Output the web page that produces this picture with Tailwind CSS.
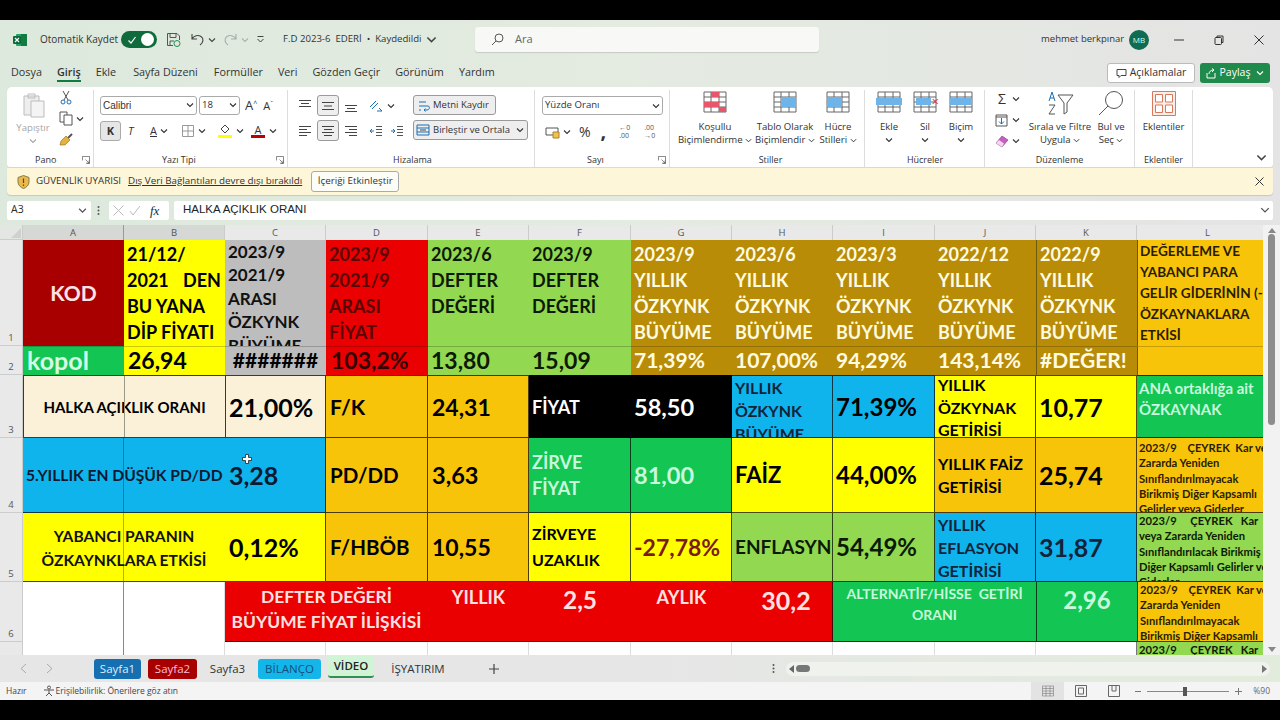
<!DOCTYPE html>
<html lang="tr">
<head>
<meta charset="UTF-8" />
<title>F.D 2023-6 EDERİ - Excel</title>
<script src="https://cdn.jsdelivr.net/npm/@tailwindcss/browser@4"></script>
</head>
<body class="bg-black w-[1280px] h-[720px] overflow-hidden font-['Open_Sans',sans-serif] text-[#2b2b2b]">
<svg class="absolute w-0 h-0">
  <symbol id="chev" viewBox="0 0 8 8"><path d="M1 2.5 4 5.5 7 2.5" fill="none" stroke="currentColor" stroke-width="1.1"/></symbol>
  <symbol id="launch" viewBox="0 0 9 9"><path d="M.5 5V.5H8.5V8.5H5M4 4 8 8M8 5V8H5" fill="none" stroke="#666" stroke-width=".9"/></symbol>
  <symbol id="tbl" viewBox="0 0 24 22"><path d="M1 1H23V21H1ZM1 6H23M1 11H23M1 16H23M8 1V21M16 1V21" fill="none" stroke="#666" stroke-width="1"/></symbol>
</svg>

<div class="h-5"></div>
<div class="h-[680px] flex flex-col bg-gradient-to-r from-[#dde9dd] via-[#e4ebe1] to-[#e4e4e4]">

  <!-- title bar -->
  <div class="h-[36px] pt-[3px] flex items-center text-[10px] whitespace-nowrap">
    <svg class="ml-[13px] w-[14px] h-[14px]" viewBox="0 0 14 14"><rect x="3" y="1" width="11" height="12" rx="1" fill="#21a366"/><rect x="8" y="1" width="6" height="12" fill="#107c41"/><rect y="3" width="8" height="8" rx="1" fill="#0b6b38"/><path d="M2 5 6 9M6 5 2 9" stroke="#fff" stroke-width="1.1"/></svg>
    <span class="ml-[13px] w-[81px] text-[#333]">Otomatik Kaydet</span>
    <div class="w-[36px] h-[17px] rounded-full bg-[#0f6b3c] flex items-center justify-between px-[3px]">
      <svg class="w-[10px] h-[10px] ml-[3px]" viewBox="0 0 10 10"><path d="M1.5 5.5 4 8 8.5 2" fill="none" stroke="#fff" stroke-width="1.2"/></svg>
      <span class="w-[13px] h-[13px] rounded-full bg-white"></span>
    </div>
    <svg class="ml-[9px] w-[15px] h-[15px]" viewBox="0 0 15 15" fill="none" stroke="#555"><path d="M1.5 1.5H11L13.5 4V8M1.5 1.5V13.5H7M4 1.5V5.5H10V1.5M4 13.5V9H8"/><circle cx="11" cy="11.5" r="3" stroke="#1f8f52"/></svg>
    <svg class="ml-[9px] w-[15px] h-[15px]" viewBox="0 0 15 15" fill="none" stroke="#444" stroke-width="1.1"><path d="M2 2V7H7M2 7C4 3.5 8 2.5 11 4.5S13.5 10.5 10 13"/></svg>
    <svg class="ml-[3px] w-[8px] h-[8px] text-[#444]"><use href="#chev"/></svg>
    <svg class="ml-[7px] w-[15px] h-[15px]" viewBox="0 0 15 15" fill="none" stroke="#a8aca8" stroke-width="1.1"><path d="M13 2V7H8M13 7C11 3.5 7 2.5 4 4.5S1.5 10.5 5 13"/></svg>
    <svg class="ml-[3px] w-[8px] h-[8px] text-[#b0b0b0]"><use href="#chev"/></svg>
    <svg class="ml-[7px] w-[9px] h-[9px]" viewBox="0 0 9 9" fill="none" stroke="#444"><path d="M1.5 1.5H7.5M1.5 4 4.5 7 7.5 4"/></svg>
    <span class="ml-[18px] w-[140px] text-[9.6px] text-[#333] whitespace-pre">F.D 2023-6  EDERİ  •  Kaydedildi</span>
    <svg class="ml-[3px] w-[11px] h-[11px] text-[#444]"><use href="#chev"/></svg>
    <div class="ml-[38px] w-[344px] h-[25px] bg-[#f8f8f6] rounded-[3px] shadow-[0_1px_1px_#0002] flex items-center text-[#666] text-[11px]">
      <svg class="ml-[16px] w-[13px] h-[13px]" viewBox="0 0 13 13" fill="none" stroke="#555"><circle cx="8" cy="5" r="4"/><path d="M5 8 1 12"/></svg>
      <span class="ml-[11px]">Ara</span>
    </div>
    <span class="ml-[222px] w-[88px] text-[9.5px] text-[#333]">mehmet berkpınar</span>
    <span class="w-5 h-5 rounded-full bg-[#0f6b52] text-[#cfe] text-[8px] flex items-center justify-center">MB</span>
    <svg class="ml-[25px] w-[10px] h-[10px]" viewBox="0 0 10 10"><path d="M0 5H10" stroke="#333"/></svg>
    <svg class="ml-[30px] w-[10px] h-[10px]" viewBox="0 0 10 10" fill="none" stroke="#333"><rect x="1" y="2.5" width="6.5" height="7" rx="1"/><path d="M3 2.5V1H9V7.5H7.5"/></svg>
    <svg class="ml-[30px] w-[10px] h-[10px]" viewBox="0 0 10 10"><path d="M.5.5 9.5 9.5M9.5.5.5 9.5" stroke="#333"/></svg>
  </div>

  <!-- menu -->
  <div class="h-[31px] flex items-start text-[10.8px] text-[#333] pl-[11px] pt-[8px]">
    <span>Dosya</span>
    <span class="ml-[15px] font-semibold border-b-2 border-[#107c41] h-[18px]">Giriş</span>
    <span class="ml-[15px]">Ekle</span>
    <span class="ml-[17px]">Sayfa Düzeni</span>
    <span class="ml-[16px]">Formüller</span>
    <span class="ml-[15px]">Veri</span>
    <span class="ml-[15px]">Gözden Geçir</span>
    <span class="ml-[15px]">Görünüm</span>
    <span class="ml-[15px]">Yardım</span>
    <div class="ml-auto mr-[10px] -mt-[1px] flex gap-[5px]">
      <span class="w-[88px] h-[20px] bg-white border border-[#bbb] rounded-[3px] flex items-center justify-center gap-[3px] text-[10.5px]">
        <svg class="w-[11px] h-[11px]" viewBox="0 0 11 11" fill="none" stroke="#444"><path d="M1 1.5H10V7.5H5L3 9.5V7.5H1Z"/></svg>Açıklamalar</span>
      <span class="w-[70px] h-[20px] bg-[#1f8a4c] text-white rounded-[3px] flex items-center justify-center gap-[3px] text-[10.5px]">
        <svg class="w-[11px] h-[11px]" viewBox="0 0 11 11" fill="none" stroke="#fff"><path d="M1 5V10H9V5M3 6C3 3.5 5 2 7.5 2M6 .5 8 2 6 4"/></svg>Paylaş
        <svg class="w-[8px] h-[8px] ml-[3px]"><use href="#chev"/></svg></span>
    </div>
  </div>

  <!-- ribbon -->
  <div class="mx-[7px] h-[80px] bg-white rounded-t-[5px] rounded-b-[3px] flex text-[9.6px] text-[#333] shadow-[0_1px_1px_#0001] whitespace-nowrap">

    <!-- Pano -->
    <div class="w-[87px] flex flex-col border-r border-[#ddd] mt-[3px]">
      <div class="flex-1 flex">
        <div class="w-[52px] flex flex-col items-center pt-[2px] text-[#a6a6a6]">
          <svg class="w-[24px] h-[26px]" viewBox="0 0 24 26" fill="none" stroke="#bdbdbd"><path d="M3 4H18V23H3Z" fill="#eee"/><path d="M7 2H14V6H7Z"/><path d="M10 9H23V25H10Z" fill="#f4f4f4"/></svg>
          <span class="mt-[3px]">Yapıştır</span>
          <svg class="w-[8px] h-[8px] mt-[2px]"><use href="#chev"/></svg>
        </div>
        <div class="flex flex-col items-start gap-[6px]">
          <svg class="w-[14px] h-[15px]" viewBox="0 0 14 15" fill="none" stroke="#555"><path d="M4 1 9 10M10 1 5 10"/><circle cx="4" cy="12" r="2" stroke="#1b6fb5"/><circle cx="10" cy="12" r="2" stroke="#1b6fb5"/></svg>
          <div class="flex items-center"><svg class="w-[14px] h-[15px]" viewBox="0 0 14 15" fill="none" stroke="#555"><path d="M1 1H8V11H1Z"/><path d="M5 4H13V14H5Z" fill="#fff"/></svg><svg class="w-[8px] h-[8px] ml-[3px]"><use href="#chev"/></svg></div>
          <svg class="w-[15px] h-[15px]" viewBox="0 0 15 15"><path d="M9 6 13 2" stroke="#555" stroke-width="2"/><path d="M2 9 7 4 11 8 6 13 1 13Z" fill="#e3b23c" stroke="#8a6a20" stroke-width=".6"/></svg>
        </div>
      </div>
      <div class="h-[15px] flex items-center pl-[28px] pr-[3px] text-[9px] justify-between"><span>Pano</span><svg class="w-[8px] h-[8px]"><use href="#launch"/></svg></div>
    </div>

    <!-- Yazı Tipi -->
    <div class="w-[194px] flex flex-col border-r border-[#ddd] mt-[3px] pl-[6px]">
      <div class="flex-1 pt-[6px]">
        <div class="flex items-center h-[18px]">
          <div class="w-[97px] h-[19px] border border-[#aaa] rounded-[3px] flex items-center justify-between px-[2px]"><span class="font-['Liberation_Sans',sans-serif] text-[10px]">Calibri</span><svg class="w-[8px] h-[8px]"><use href="#chev"/></svg></div>
          <div class="ml-[2px] w-[41px] h-[19px] border border-[#aaa] rounded-[3px] flex items-center justify-between px-[2px]"><span>18</span><svg class="w-[8px] h-[8px]"><use href="#chev"/></svg></div>
          <span class="ml-[5px] text-[13px] leading-none">A<sup class="text-[7px]">^</sup></span>
          <span class="ml-[6px] text-[11px] leading-none">A<sup class="text-[7px]">ˇ</sup></span>
        </div>
        <div class="flex items-center h-[20px] mt-[7px]">
          <span class="w-[21px] h-[20px] bg-[#e6e6e6] border border-[#aaa] rounded-[3px] font-bold flex items-center justify-center text-[11px]">K</span>
          <span class="ml-[7px] w-[6px] italic text-[11px]">T</span>
          <span class="ml-[16px] underline text-[11px]">A</span>
          <svg class="ml-[3px] w-[8px] h-[8px]"><use href="#chev"/></svg>
          <svg class="ml-[14px] w-[12px] h-[12px]" viewBox="0 0 12 12" fill="none" stroke="#999"><path d="M.5.5H11.5V11.5H.5ZM6 .5V11.5M.5 6H11.5"/></svg>
          <svg class="ml-[4px] w-[8px] h-[8px]"><use href="#chev"/></svg>
          <div class="ml-[12px] flex flex-col items-center"><svg class="w-[13px] h-[11px]" viewBox="0 0 13 11" fill="none" stroke="#444"><path d="M3 5 7 1 11 5 7 9Z"/></svg><span class="w-[14px] h-[3px] bg-[#ffff00]"></span></div>
          <svg class="ml-[4px] w-[8px] h-[8px]"><use href="#chev"/></svg>
          <div class="ml-[7px] flex flex-col items-center leading-none"><span class="text-[11px] h-[11px] leading-[11px]">A</span><span class="w-[14px] h-[3px] bg-[#c00000]"></span></div>
          <svg class="ml-[4px] w-[8px] h-[8px]"><use href="#chev"/></svg>
        </div>
      </div>
      <div class="h-[15px] flex items-center text-[9px] pr-[3px] justify-between"><span class="ml-[62px]">Yazı Tipi</span><svg class="w-[8px] h-[8px]"><use href="#launch"/></svg></div>
    </div>

    <!-- Hizalama -->
    <div class="w-[247px] flex flex-col border-r border-[#ddd] mt-[3px] pl-[10px]">
      <div class="flex-1 pt-[5px] flex">
        <div class="w-[115px]">
          <div class="flex items-center h-[21px]">
            <svg class="w-[14px] h-[14px]" viewBox="0 0 14 14" stroke="#444"><path d="M1 1.5H13M3 4.5H11M1 7.5H13"/></svg>
            <span class="ml-[5px] w-[22px] h-[21px] bg-[#eee] border border-[#999] rounded-[3px] flex items-center justify-center"><svg class="w-[14px] h-[14px]" viewBox="0 0 14 14" stroke="#444"><path d="M1 3.5H13M3 7H11M1 10.5H13"/></svg></span>
            <svg class="ml-[5px] w-[14px] h-[14px]" viewBox="0 0 14 14" stroke="#444"><path d="M1 6.5H13M3 9.5H11M1 12.5H13"/></svg>
            <svg class="ml-[11px] w-[14px] h-[14px]" viewBox="0 0 14 14" fill="none" stroke="#555"><path d="M1 8 7 2M3 10 9 4M8 12H13M13 12 10 9" stroke="#1b6fb5"/></svg>
            <svg class="ml-[4px] w-[8px] h-[8px]"><use href="#chev"/></svg>
          </div>
          <div class="flex items-center h-[21px] mt-[4px]">
            <svg class="w-[14px] h-[14px]" viewBox="0 0 14 14" stroke="#444"><path d="M1 2.5H13M1 5.5H9M1 8.5H13M1 11.5H9"/></svg>
            <span class="ml-[5px] w-[22px] h-[21px] bg-[#eee] border border-[#999] rounded-[3px] flex items-center justify-center"><svg class="w-[14px] h-[14px]" viewBox="0 0 14 14" stroke="#444"><path d="M1 2.5H13M3 5.5H11M1 8.5H13M3 11.5H11"/></svg></span>
            <svg class="ml-[5px] w-[14px] h-[14px]" viewBox="0 0 14 14" stroke="#444"><path d="M1 2.5H13M5 5.5H13M1 8.5H13M5 11.5H13"/></svg>
            <svg class="ml-[11px] w-[14px] h-[14px]" viewBox="0 0 14 14" fill="none" stroke="#555"><path d="M7 2.5H13M7 5.5H13M7 8.5H13M7 11.5H13"/><path d="M5 7H1M3 5 1 7 3 9" stroke="#1b6fb5"/></svg>
            <svg class="ml-[7px] w-[14px] h-[14px]" viewBox="0 0 14 14" fill="none" stroke="#555"><path d="M7 2.5H13M7 5.5H13M7 8.5H13M7 11.5H13"/><path d="M1 7H5M3 5 5 7 3 9" stroke="#1b6fb5"/></svg>
          </div>
        </div>
        <div>
          <div class="w-[83px] h-[20px] bg-[#eee] border border-[#999] rounded-[3px] flex items-center px-[4px] gap-[3px] text-[9.5px]">
            <svg class="w-[12px] h-[13px]" viewBox="0 0 12 13" fill="none" stroke="#1b6fb5"><path d="M1 3H8M1 7H10C12 7 12 11 9 11H6M7.5 9.5 6 11 7.5 12.5M1 11H3"/></svg>Metni Kaydır</div>
          <div class="mt-[5px] w-[115px] h-[20px] bg-[#eee] border border-[#999] rounded-[3px] flex items-center px-[2px] gap-[3px] text-[9.5px]">
            <svg class="w-[14px] h-[14px]" viewBox="0 0 14 14" fill="none" stroke="#1b6fb5"><path d="M1 2H13V12H1ZM1 5H13M1 9H13"/><path d="M4 7H10" stroke="#444"/></svg>
            Birleştir ve Ortala<svg class="w-[8px] h-[8px] ml-auto mr-[1px]"><use href="#chev"/></svg></div>
        </div>
      </div>
      <div class="h-[15px] flex items-center text-[9px]"><span class="ml-[95px]">Hizalama</span></div>
    </div>

    <!-- Sayı -->
    <div class="w-[135px] flex flex-col border-r border-[#ddd] mt-[3px] pl-[7px]">
      <div class="flex-1 pt-[6px]">
        <div class="w-[121px] h-[19px] border border-[#aaa] rounded-[3px] flex items-center justify-between px-[2px]">Yüzde Oranı<svg class="w-[8px] h-[8px]"><use href="#chev"/></svg></div>
        <div class="flex items-center h-[20px] mt-[7px] pl-[3px]">
          <svg class="w-[15px] h-[14px]" viewBox="0 0 15 14" fill="none" stroke="#555"><path d="M1 3H13V10H1Z"/><path d="M8 7H14V13H8Z" fill="#f2c14e" stroke="#a9832a"/></svg>
          <svg class="ml-[3px] w-[8px] h-[8px]"><use href="#chev"/></svg>
          <span class="ml-[8px] text-[14px] leading-none">%</span>
          <span class="ml-[10px] text-[20px] font-bold leading-none h-[22px]">,</span>
          <span class="ml-[13px] text-[7px] leading-[8px] text-[#555] w-[14px]">←0<br>.00</span>
          <span class="ml-[11px] text-[7px] leading-[8px] text-[#555] w-[14px]">.00<br>→0</span>
        </div>
      </div>
      <div class="h-[15px] flex items-center text-[9px] pr-[3px] justify-between"><span class="ml-[45px]">Sayı</span><svg class="w-[8px] h-[8px]"><use href="#launch"/></svg></div>
    </div>

    <!-- Stiller -->
    <div class="w-[195px] flex flex-col border-r border-[#ddd] mt-[3px] pl-[7px]">
      <div class="flex-1 flex text-center leading-[13px]">
        <div class="w-[76px] flex flex-col items-center">
          <span class="relative h-[22px] w-[24px] mt-[1px] mb-[7px]"><svg class="w-[24px] h-[22px]"><use href="#tbl"/></svg><span class="absolute left-[8px] top-[1px] w-[8px] h-[5px] bg-[#e8566b]"></span><span class="absolute left-[1px] top-[11px] w-[15px] h-[5px] bg-[#e8566b]"></span><span class="absolute left-[16px] top-[16px] w-[7px] h-[5px] bg-[#e8566b]"></span></span>
          <span>Koşullu</span>
          <span>Biçimlendirme <svg class="inline w-[7px] h-[7px]"><use href="#chev"/></svg></span>
        </div>
        <div class="w-[68px] -ml-[2px] flex flex-col items-center">
          <span class="relative h-[22px] w-[24px] mt-[1px] mb-[7px]"><svg class="w-[24px] h-[22px]"><use href="#tbl"/></svg><span class="absolute left-[8px] top-[6px] w-[15px] h-[10px] bg-[#6fb4e8]"></span></span>
          <span>Tablo Olarak</span>
          <span>Biçimlendir <svg class="inline w-[7px] h-[7px]"><use href="#chev"/></svg></span>
        </div>
        <div class="w-[42px] -ml-[2px] flex flex-col items-center">
          <span class="relative h-[22px] w-[24px] mt-[1px] mb-[7px]"><svg class="w-[24px] h-[22px]"><use href="#tbl"/></svg><span class="absolute left-[1px] top-[6px] w-[15px] h-[10px] bg-[#6fb4e8]"></span></span>
          <span>Hücre</span>
          <span>Stilleri <svg class="inline w-[7px] h-[7px]"><use href="#chev"/></svg></span>
        </div>
      </div>
      <div class="h-[15px] flex items-center justify-center text-[9px]">Stiller</div>
    </div>

    <!-- Hücreler -->
    <div class="w-[120px] flex flex-col border-r border-[#ddd] mt-[3px] pl-[11px]">
      <div class="flex-1 flex text-center leading-[13px] gap-[10px]">
        <div class="w-[26px] flex flex-col items-center">
          <span class="relative h-[22px] w-[26px] mt-[1px] mb-[7px]"><svg class="w-[26px] h-[22px]"><use href="#tbl"/></svg><span class="absolute left-0 top-[7px] w-[26px] h-[7px] bg-[#6fb4e8]"></span></span><span>Ekle</span><svg class="w-[8px] h-[8px] mt-[3px]"><use href="#chev"/></svg>
        </div>
        <div class="w-[26px] flex flex-col items-center">
          <span class="relative h-[22px] w-[26px] mt-[1px] mb-[7px]"><svg class="w-[26px] h-[22px]"><use href="#tbl"/></svg><span class="absolute left-[4px] top-[7px] w-[15px] h-[7px] bg-[#6fb4e8]"></span><span class="absolute right-[-1px] top-[4px] text-[#c8413a] text-[13px] leading-none">×</span></span><span>Sil</span><svg class="w-[8px] h-[8px] mt-[3px]"><use href="#chev"/></svg>
        </div>
        <div class="w-[26px] flex flex-col items-center">
          <span class="relative h-[22px] w-[24px] mt-[1px] mb-[7px]"><svg class="w-[24px] h-[22px]"><use href="#tbl"/></svg><span class="absolute left-[1px] top-[7px] w-[22px] h-[7px] bg-[#6fb4e8]"></span></span><span>Biçim</span><svg class="w-[8px] h-[8px] mt-[3px]"><use href="#chev"/></svg>
        </div>
      </div>
      <div class="h-[15px] flex items-center justify-center text-[9px] pr-[10px]">Hücreler</div>
    </div>

    <!-- Düzenleme -->
    <div class="w-[150px] flex flex-col border-r border-[#ddd] mt-[3px] pl-[10px]">
      <div class="flex-1 flex leading-[13px] text-center">
        <div class="w-[32px] flex flex-col gap-[5px] pt-[1px]">
          <div class="flex items-center h-[16px]"><span class="text-[14px] leading-none w-[14px]">Σ</span><svg class="ml-[3px] w-[8px] h-[8px]"><use href="#chev"/></svg></div>
          <div class="flex items-center h-[16px]"><svg class="w-[13px] h-[13px]" viewBox="0 0 13 13" fill="none" stroke="#555"><path d="M1 1H12V12H1ZM1 3H12"/><path d="M6.5 4V10M4 7.5 6.5 10 9 7.5" stroke="#1b6fb5"/></svg><svg class="ml-[4px] w-[8px] h-[8px]"><use href="#chev"/></svg></div>
          <div class="flex items-center h-[16px]"><svg class="w-[14px] h-[13px]" viewBox="0 0 14 13"><path d="M1 8 7 1 13 5 7 12Z" fill="#c65fc1" stroke="#7a3a78" stroke-width=".6"/><path d="M1 8 4 5 9 8.5 7 12Z" fill="#f3d6f2"/></svg><svg class="ml-[3px] w-[8px] h-[8px]"><use href="#chev"/></svg></div>
        </div>
        <div class="w-[66px] flex flex-col items-center">
          <svg class="w-[28px] h-[26px] mb-[4px]" viewBox="0 0 28 26" fill="none" stroke="#555"><path d="M3 11 6 2 9 11M4 8H8" stroke="#1b6fb5"/><path d="M3 15H9L3 24H9"/><path d="M12 5H27L21 13V22L18 24V13Z"/></svg>
          <span>Sırala ve Filtre</span>
          <span>Uygula <svg class="inline w-[7px] h-[7px]"><use href="#chev"/></svg></span>
        </div>
        <div class="w-[36px] flex flex-col items-center">
          <svg class="w-[26px] h-[26px] mb-[4px]" viewBox="0 0 26 26" fill="none" stroke="#555"><circle cx="16" cy="10" r="8.5"/><path d="M10 16 1 25"/></svg>
          <span>Bul ve</span>
          <span>Seç <svg class="inline w-[7px] h-[7px]"><use href="#chev"/></svg></span>
        </div>
      </div>
      <div class="h-[15px] flex items-center justify-center text-[9px] pr-[10px]">Düzenleme</div>
    </div>

    <!-- Eklentiler -->
    <div class="w-[58px] flex flex-col border-r border-[#ddd] mt-[3px]">
      <div class="flex-1 flex flex-col items-center leading-[13px]">
        <svg class="w-[24px] h-[25px] mt-[1px] mb-[4px]" viewBox="0 0 24 25" fill="none" stroke="#d9785a"><path d="M.5.5H23.5V24.5H.5Z" fill="#fbeee8"/><path d="M3.5 3.5H10.5V11H3.5ZM13.5 3.5H20.5V11H13.5ZM3.5 14H10.5V21.5H3.5ZM13.5 14H20.5V21.5H13.5Z" fill="#fff"/></svg>
        <span>Eklentiler</span>
      </div>
      <div class="h-[15px] flex items-center justify-center text-[9px]">Eklentiler</div>
    </div>
    <div class="flex-1 flex items-end justify-end pr-[6px] pb-[4px]"><svg class="w-[11px] h-[11px] text-[#444]"><use href="#chev"/></svg></div>
  </div>

  <!-- security bar -->
  <div class="mt-[1px] mx-[7px] h-[27px] bg-[#fdf6d8] rounded-b-[4px] flex items-center text-[9.8px] text-[#333] shadow-[0_1px_1px_#0002]">
    <svg class="ml-[10px] w-[13px] h-[14px]" viewBox="0 0 13 14"><path d="M6.5.5 12 2.5V7C12 10 9.5 12.5 6.5 13.5 3.5 12.5 1 10 1 7V2.5Z" fill="#e9b949" stroke="#8a7a4a"/><path d="M6.5 3.5V8M6.5 9.5V11" stroke="#5a4a20" stroke-width="1.2"/></svg>
    <span class="ml-[6px]">GÜVENLİK UYARISI</span>
    <span class="ml-[7px] underline text-[9.8px]">Dış Veri Bağlantıları devre dışı bırakıldı</span>
    <span class="ml-[9px] w-[88px] h-[21px] bg-[#fdfdf8] border border-[#aaa] rounded-[3px] flex items-center justify-center">İçeriği Etkinleştir</span>
    <svg class="ml-auto mr-[9px] w-[9px] h-[9px]" viewBox="0 0 9 9"><path d="M.5.5 8.5 8.5M8.5.5.5 8.5" stroke="#333"/></svg>
  </div>

  <!-- formula bar -->
  <div class="mt-[5px] h-[20px] flex items-center text-[11px] pl-[7px] pr-[7px]">
    <div class="w-[84px] h-[19px] bg-white rounded-[2px] flex items-center justify-between px-[4px] text-[10.5px]">A3<svg class="w-[9px] h-[9px] text-[#555]"><use href="#chev"/></svg></div>
    <svg class="ml-[6px] w-[3px] h-[11px]" viewBox="0 0 3 11" fill="#555"><circle cx="1.5" cy="2" r="1"/><circle cx="1.5" cy="5.5" r="1"/><circle cx="1.5" cy="9" r="1"/></svg>
    <div class="ml-[9px] w-[60px] h-[19px] bg-white rounded-[2px] flex items-center px-[4px] gap-[5px]">
      <svg class="w-[11px] h-[11px]" viewBox="0 0 11 11"><path d="M.5.5 10.5 10.5M10.5.5.5 10.5" stroke="#bbb"/></svg>
      <svg class="w-[12px] h-[11px]" viewBox="0 0 12 11" fill="none"><path d="M1 6 4 10 11 1" stroke="#bbb"/></svg>
      <span class="ml-[4px] font-['Liberation_Serif',serif] italic text-[13px] leading-none">fx</span>
    </div>
    <div class="ml-[5px] flex-1 h-[19px] bg-white rounded-[2px] flex items-center pl-[9px] font-['Liberation_Sans',sans-serif] text-[11.5px] text-[#222]">HALKA AÇIKLIK ORANI
      <svg class="ml-auto mr-[3px] w-[10px] h-[10px] text-[#555]"><use href="#chev"/></svg></div>
  </div>

  <!-- sheet -->
  <div class="mt-[5px] h-[430px] flex bg-white font-['Lato',sans-serif] font-bold text-black overflow-hidden">
    <div class="w-[1263px] grid grid-cols-[23px_101px_101px_101px_102px_101px_102px_101px_101px_102px_101px_101px_126px] grid-rows-[15px_106px_29px_63px_75px_69px_60px_13px] leading-[26px]">
      <!-- column headers -->
      <div class="bg-[#e4e6e4] border-r border-b border-[#ccc] flex items-end justify-end p-[1px]"><span class="w-0 h-0 border-l-[10px] border-l-transparent border-b-[10px] border-b-[#cfd1cf]"></span></div>
      <div class="bg-[#d6d8d6] border-r border-[#999] text-[#555] font-normal font-['Open_Sans'] text-[9.5px] leading-[15px] text-center">A</div>
      <div class="bg-[#d6d8d6] border-r border-[#ccc] text-[#555] font-normal font-['Open_Sans'] text-[9.5px] leading-[15px] text-center">B</div>
      <div class="bg-[#e8e9e8] border-r border-[#ccc] text-[#555] font-normal font-['Open_Sans'] text-[9.5px] leading-[15px] text-center">C</div>
      <div class="bg-[#e8e9e8] border-r border-[#ccc] text-[#555] font-normal font-['Open_Sans'] text-[9.5px] leading-[15px] text-center">D</div>
      <div class="bg-[#e8e9e8] border-r border-[#ccc] text-[#555] font-normal font-['Open_Sans'] text-[9.5px] leading-[15px] text-center">E</div>
      <div class="bg-[#e8e9e8] border-r border-[#ccc] text-[#555] font-normal font-['Open_Sans'] text-[9.5px] leading-[15px] text-center">F</div>
      <div class="bg-[#e8e9e8] border-r border-[#ccc] text-[#555] font-normal font-['Open_Sans'] text-[9.5px] leading-[15px] text-center">G</div>
      <div class="bg-[#e8e9e8] border-r border-[#ccc] text-[#555] font-normal font-['Open_Sans'] text-[9.5px] leading-[15px] text-center">H</div>
      <div class="bg-[#e8e9e8] border-r border-[#ccc] text-[#555] font-normal font-['Open_Sans'] text-[9.5px] leading-[15px] text-center">I</div>
      <div class="bg-[#e8e9e8] border-r border-[#ccc] text-[#555] font-normal font-['Open_Sans'] text-[9.5px] leading-[15px] text-center">J</div>
      <div class="bg-[#e8e9e8] border-r border-[#ccc] text-[#555] font-normal font-['Open_Sans'] text-[9.5px] leading-[15px] text-center">K</div>
      <div class="bg-[#e8e9e8] text-[#555] font-normal font-['Open_Sans'] text-[9.5px] leading-[15px] text-center pl-[15px]">L</div>

      <!-- row 1 -->
      <div class="bg-[#e8e9e8] border-r border-b border-[#ccc] text-[#555] font-normal font-['Open_Sans'] text-[9.5px] flex items-end justify-center leading-[15px]">1</div>
      <div class="bg-[#a80000] text-[#fbe4e4] text-[21px] flex items-center justify-center">KOD</div>
      <div class="bg-[#ffff00] text-[18px] pl-[3px] pr-[4px] pt-[1px] overflow-hidden"><div>21/12/</div><div class="flex justify-between"><span>2021</span><span>DEN</span></div><div>BU YANA</div><div>DİP FİYATI</div></div>
      <div class="bg-[#bdbdbd] text-[17px] leading-[23.4px] pl-[3px] overflow-hidden text-[#111]"><div>2023/9</div><div>2021/9</div><div>ARASI</div><div>ÖZKYNK</div><div>BÜYÜME</div></div>
      <div class="bg-[#ea0000] text-[18px] pl-[3px] pt-[1px] overflow-hidden text-[#5a0505]"><div>2023/9</div><div>2021/9</div><div>ARASI</div><div>FİYAT</div></div>
      <div class="bg-[#92d850] text-[18px] pl-[3px] pt-[1px] text-[#0c1a05]"><div>2023/6</div><div>DEFTER</div><div>DEĞERİ</div></div>
      <div class="bg-[#92d850] text-[18px] pl-[3px] pt-[1px] text-[#0c1a05]"><div>2023/9</div><div>DEFTER</div><div>DEĞERİ</div></div>
      <div class="bg-[#b88c07] text-[18px] pl-[3px] pt-[1px] text-[#fffbe0]"><div>2023/9</div><div>YILLIK</div><div>ÖZKYNK</div><div>BÜYÜME</div></div>
      <div class="bg-[#b88c07] text-[18px] pl-[3px] pt-[1px] text-[#fffbe0]"><div>2023/6</div><div>YILLIK</div><div>ÖZKYNK</div><div>BÜYÜME</div></div>
      <div class="bg-[#b88c07] text-[18px] pl-[3px] pt-[1px] text-[#fffbe0]"><div>2023/3</div><div>YILLIK</div><div>ÖZKYNK</div><div>BÜYÜME</div></div>
      <div class="bg-[#b88c07] text-[18px] pl-[3px] pt-[1px] text-[#fffbe0]"><div>2022/12</div><div>YILLIK</div><div>ÖZKYNK</div><div>BÜYÜME</div></div>
      <div class="bg-[#b88c07] text-[18px] pl-[3px] pt-[1px] text-[#fffbe0] border-l border-[#6b5a10]"><div>2022/9</div><div>YILLIK</div><div>ÖZKYNK</div><div>BÜYÜME</div></div>
      <div class="bg-[#f8c40a] text-[13.6px] leading-[21px] pl-[2px] pt-[1px] overflow-hidden whitespace-nowrap border-l border-[#555] text-[#2a1c00]"><div>DEĞERLEME VE</div><div>YABANCI PARA</div><div>GELİR GİDERİNİN (-</div><div>ÖZKAYNAKLARA</div><div>ETKİSİ</div></div>

      <!-- row 2 -->
      <div class="bg-[#e8e9e8] border-r border-b border-[#ccc] text-[#555] font-normal font-['Open_Sans'] text-[9.5px] flex items-end justify-center leading-[15px]">2</div>
      <div class="bg-[#13c552] text-[#d5fbe5] text-[25px] pl-[4px] pb-[3px] flex items-center border-t border-black/20">kopol</div>
      <div class="bg-[#ffff00] text-[23px] pl-[4px] pb-[3px] flex items-center border-t border-black/20">26,94</div>
      <div class="bg-[#bdbdbd] text-[21px] pb-[3px] flex items-center justify-center border-t border-black/20">#######</div>
      <div class="bg-[#ea0000] text-[23px] pl-[5px] pb-[3px] flex items-center border-t border-black/20 text-[#300]">103,2%</div>
      <div class="bg-[#92d850] text-[23px] pl-[3px] pb-[3px] flex items-center border-t border-black/20 text-[#0c1a05]">13,80</div>
      <div class="bg-[#92d850] text-[23px] pl-[3px] pb-[3px] flex items-center border-t border-black/20 text-[#0c1a05]">15,09</div>
      <div class="bg-[#b88c07] text-[21px] pl-[3px] pb-[3px] flex items-center border-t border-black/20 text-[#fffbe0]">71,39%</div>
      <div class="bg-[#b88c07] text-[21px] pl-[3px] pb-[3px] flex items-center border-t border-black/20 text-[#fffbe0]">107,00%</div>
      <div class="bg-[#b88c07] text-[21px] pl-[3px] pb-[3px] flex items-center border-t border-black/20 text-[#fffbe0]">94,29%</div>
      <div class="bg-[#b88c07] text-[21px] pl-[3px] pb-[3px] flex items-center border-t border-black/20 text-[#fffbe0]">143,14%</div>
      <div class="bg-[#b88c07] text-[21px] pl-[3px] pb-[3px] flex items-center border-t border-black/20 text-[#fffbe0] border-l border-l-[#6b5a10] whitespace-nowrap">#DEĞER!</div>
      <div class="bg-[#f8c40a] border-l border-[#555] border-t border-t-black/20"></div>

      <!-- row 3 -->
      <div class="bg-[#e8e9e8] border-r border-b border-[#ccc] text-[#555] font-normal font-['Open_Sans'] text-[9.5px] flex items-end justify-center leading-[15px]">3</div>
      <div class="col-span-2 relative bg-[#fbf1d8] border-y border-l border-[#1c4a2a] text-[15px] flex items-center justify-center">HALKA AÇIKLIK ORANI<span class="absolute left-[100px] top-0 bottom-0 w-px bg-[#9a9a8a]"></span></div>
      <div class="bg-[#fbf1d8] border border-[#1c4a2a] text-[25px] pl-[3px] flex items-center">21,00%</div>
      <div class="bg-[#f8c40a] border-y border-r border-black/70 text-[21px] pl-[4px] flex items-center">F/K</div>
      <div class="bg-[#f8c40a] border-y border-r border-black/70 text-[23px] pl-[4px] flex items-center">24,31</div>
      <div class="bg-black border-y border-black text-white text-[18px] pl-[3px] flex items-center">FİYAT</div>
      <div class="bg-black border-y border-black text-white text-[23.5px] pl-[3px] flex items-center">58,50</div>
      <div class="bg-[#10b4ec] border-y border-r border-black/70 text-[16px] leading-[23px] pl-[3px] overflow-hidden text-[#10233a]"><div>YILLIK</div><div>ÖZKYNK</div><div>BÜYÜME</div></div>
      <div class="bg-[#10b4ec] border-y border-r border-black/70 text-[24px] flex items-center pl-[3px]">71,39%</div>
      <div class="bg-[#ffff00] border-y border-r border-black/70 text-[16px] leading-[22.5px] pl-[3px] overflow-hidden"><div class="-mt-[2px]">YILLIK</div><div class="whitespace-nowrap">ÖZKYNAK</div><div>GETİRİSİ</div></div>
      <div class="bg-[#ffff00] border-y border-r border-black/70 text-[25px] flex items-center pl-[3px]">10,77</div>
      <div class="bg-[#13c552] border-y border-black/70 text-[#c9f9dc] text-[15px] leading-[21px] pl-[2px] pt-[2px]"><div>ANA ortaklığa ait</div><div>ÖZKAYNAK</div></div>

      <!-- row 4 -->
      <div class="bg-[#e8e9e8] border-r border-b border-[#ccc] text-[#555] font-normal font-['Open_Sans'] text-[9.5px] flex items-end justify-center leading-[15px]">4</div>
      <div class="col-span-2 relative bg-[#10b4ec] border-b border-black/70 text-[15.6px] flex items-center pl-[3px] whitespace-nowrap text-[#0b1a33]">5.YILLIK EN DÜŞÜK PD/DD<span class="absolute left-[100px] top-0 bottom-0 w-px bg-black/30"></span></div>
      <div class="relative bg-[#10b4ec] border-b border-r border-black/70 text-[25px] pl-[4px] flex items-center text-[#0b1a33]">3,28
        <svg class="absolute left-[17px] top-[16px] w-[10px] h-[10px]" viewBox="0 0 10 10"><path d="M3.5.5H6.5V3.5H9.5V6.5H6.5V9.5H3.5V6.5H.5V3.5H3.5Z" fill="#fff" stroke="#222" stroke-width=".8"/></svg></div>
      <div class="bg-[#f8c40a] border-b border-r border-black/70 text-[20.5px] pl-[4px] flex items-center">PD/DD</div>
      <div class="bg-[#f8c40a] border-b border-r border-black/70 text-[23.5px] pl-[4px] flex items-center">3,63</div>
      <div class="bg-[#13c552] border-b border-r border-black/70 text-[#c9f9dc] text-[18px] pl-[3px] flex flex-col justify-center"><div>ZİRVE</div><div>FİYAT</div></div>
      <div class="bg-[#13c552] border-b border-r border-black/70 text-[#c9f9dc] text-[23.5px] pl-[3px] flex items-center">81,00</div>
      <div class="bg-[#ffff00] border-b border-r border-black/70 text-[22px] pl-[3px] flex items-center">FAİZ</div>
      <div class="bg-[#ffff00] border-b border-r border-black/70 text-[24px] flex items-center pl-[3px]">44,00%</div>
      <div class="bg-[#f8c40a] border-b border-r border-black/70 text-[16px] leading-[23px] pl-[3px] flex flex-col justify-center"><div>YILLIK FAİZ</div><div>GETİRİSİ</div></div>
      <div class="bg-[#f8c40a] border-b border-r border-black/70 text-[25px] flex items-center pl-[3px]">25,74</div>
      <div class="bg-[#f8c40a] border-b border-black/70 text-[11.2px] leading-[15.3px] pl-[2px] pt-[2px] overflow-hidden whitespace-nowrap text-[#2a1c00]"><div class="whitespace-pre">2023/9    ÇEYREK  Kar ve</div><div>Zararda Yeniden</div><div>Sınıflandırılmayacak</div><div>Birikmiş Diğer Kapsamlı</div><div>Gelirler veya Giderler</div></div>

      <!-- row 5 -->
      <div class="bg-[#e8e9e8] border-r border-b border-[#ccc] text-[#555] font-normal font-['Open_Sans'] text-[9.5px] flex items-end justify-center leading-[15px]">5</div>
      <div class="col-span-2 relative bg-[#ffff00] border-b border-black/70 text-[15.6px] leading-[24px] pt-[1px] flex flex-col justify-center items-center text-[#111]"><div>YABANCI PARANIN</div><div>ÖZKAYNKLARA ETKİSİ</div><span class="absolute left-[100px] top-0 bottom-0 w-px bg-black/30"></span></div>
      <div class="bg-[#ffff00] border-b border-r border-black/70 text-[25px] pl-[4px] flex items-center">0,12%</div>
      <div class="bg-[#f8c40a] border-b border-r border-black/70 text-[20.5px] pl-[4px] flex items-center">F/HBÖB</div>
      <div class="bg-[#f8c40a] border-b border-r border-black/70 text-[23px] pl-[4px] flex items-center">10,55</div>
      <div class="bg-[#ffff00] border-b border-r border-black/70 text-[16px] pl-[3px] flex flex-col justify-center"><div>ZİRVEYE</div><div>UZAKLIK</div></div>
      <div class="bg-[#ffff00] border-b border-r border-black/70 text-[#7a1a10] text-[23px] pl-[3px] flex items-center whitespace-nowrap">-27,78%</div>
      <div class="bg-[#92d850] border-b border-r border-black/70 text-[19px] pl-[3px] flex items-center whitespace-nowrap text-[#0c1a05]">ENFLASYN</div>
      <div class="bg-[#92d850] border-b border-r border-black/70 text-[24px] flex items-center pl-[3px] text-[#0c1a05]">54,49%</div>
      <div class="bg-[#10b4ec] border-b border-r border-black/70 text-[16px] leading-[23px] pl-[3px] overflow-hidden text-[#10233a]"><div>YILLIK</div><div>EFLASYON</div><div>GETİRİSİ</div></div>
      <div class="bg-[#10b4ec] border-b border-r border-black/70 text-[25px] flex items-center pl-[3px] text-[#10233a]">31,87</div>
      <div class="bg-[#92d850] border-b border-black/70 text-[11.2px] leading-[15.3px] pl-[2px] overflow-hidden whitespace-nowrap text-[#0c1a05]"><div class="whitespace-pre">2023/9     ÇEYREK   Kar</div><div>veya Zararda Yeniden</div><div>Sınıflandırılacak Birikmiş</div><div>Diğer Kapsamlı Gelirler ve</div><div>Giderler</div></div>

      <!-- row 6 -->
      <div class="bg-[#e8e9e8] border-r border-b border-[#ccc] text-[#555] font-normal font-['Open_Sans'] text-[9.5px] flex items-end justify-center leading-[15px]">6</div>
      <div class="bg-white border-r border-[#888]"></div>
      <div class="bg-white border-r border-[#ddd]"></div>
      <div class="col-span-2 bg-[#ea0000] border-b border-black/70 text-[#fde2e2] text-[17.4px] leading-[25px] text-center pt-[2px] whitespace-nowrap"><div>DEFTER DEĞERİ</div><div>BÜYÜME FİYAT İLİŞKİSİ</div></div>
      <div class="bg-[#ea0000] border-b border-black/40 text-[#fde2e2] text-[18px] text-center pt-[2px]">YILLIK</div>
      <div class="bg-[#ea0000] border-b border-black/40 text-[#fde2e2] text-[24.5px] text-center pt-[5px]">2,5</div>
      <div class="bg-[#ea0000] border-b border-black/40 text-[#fde2e2] text-[18px] text-center pt-[2px]">AYLIK</div>
      <div class="bg-[#ea0000] border-b border-black/70 border-r text-[#fde2e2] text-[25px] text-center pl-[8px] pt-[5px]">30,2</div>
      <div class="col-span-2 bg-[#13c552] border-b border-black/70 text-[#c9f9dc] text-[14px] leading-[21px] text-center pt-[1px] whitespace-pre"><div>ALTERNATİF/HİSSE  GETİRİ</div><div>ORANI</div></div>
      <div class="bg-[#13c552] border-b border-l border-black/70 text-[#c9f9dc] text-[24px] text-center pt-[5px]">2,96</div>
      <div class="bg-[#f8c40a] border-b border-l border-black/70 text-[11.2px] leading-[15.3px] pl-[2px] overflow-hidden whitespace-nowrap text-[#2a1c00]"><div class="whitespace-pre">2023/9    ÇEYREK  Kar ve</div><div>Zararda Yeniden</div><div>Sınıflandırılmayacak</div><div>Birikmiş Diğer Kapsamlı</div></div>

      <!-- row 7 -->
      <div class="bg-[#e8e9e8] border-r border-[#ccc]"></div>
      <div class="border-r border-[#888]"></div>
      <div class="border-r border-[#ddd]"></div>
      <div class="border-r border-[#ddd]"></div>
      <div class="border-r border-[#ddd]"></div>
      <div class="border-r border-[#ddd]"></div>
      <div class="border-r border-[#ddd]"></div>
      <div class="border-r border-[#ddd]"></div>
      <div class="border-r border-[#ddd]"></div>
      <div class="border-r border-[#ddd]"></div>
      <div class="border-r border-[#ddd]"></div>
      <div class="border-r border-[#777]"></div>
      <div class="bg-[#92d850] text-[11.2px] leading-[15px] pl-[2px] overflow-hidden whitespace-pre text-[#0c1a05]">2023/9     ÇEYREK   Kar</div>
    </div>

    <!-- vertical scrollbar -->
    <div class="flex-1 bg-[#f2f2f2] flex flex-col items-center justify-between">
      <div class="w-full flex flex-col items-center">
        <span class="mt-[3px] w-0 h-0 border-x-[4px] border-x-transparent border-b-[5px] border-b-[#888]"></span>
        <span class="mt-[1px] w-[7px] h-[191px] rounded-full bg-[#8d8d8d]"></span>
      </div>
      <span class="mb-[3px] w-0 h-0 border-x-[4px] border-x-transparent border-t-[5px] border-t-[#888]"></span>
    </div>
  </div>

  <!-- sheet tabs -->
  <div class="h-[27px] flex items-center text-[11.5px] bg-gradient-to-r from-[#e6e6e6] via-[#e6e6e6] to-[#e2ecdc]">
    <svg class="ml-[20px] w-[7px] h-[11px]" viewBox="0 0 7 11" fill="none" stroke="#aaa"><path d="M6 1 1 5.5 6 10"/></svg>
    <svg class="ml-[19px] w-[7px] h-[11px]" viewBox="0 0 7 11" fill="none" stroke="#aaa"><path d="M1 1 6 5.5 1 10"/></svg>
    <span class="ml-[41px] w-[47px] h-[20px] rounded-[3px] bg-[#166fb0] text-[#dcefff] flex items-center justify-center">Sayfa1</span>
    <span class="ml-[7px] w-[49px] h-[20px] rounded-[3px] bg-[#a80000] text-[#fbd] flex items-center justify-center">Sayfa2</span>
    <span class="ml-[14px] w-[33px] text-[#333] flex justify-center">Sayfa3</span>
    <span class="ml-[14px] w-[63px] h-[20px] rounded-[3px] bg-[#14b6ea] text-[#14507a] flex items-center justify-center">BİLANÇO</span>
    <span class="ml-[7px] w-[46px] h-[23px] rounded-[3px] bg-[#d2f4d6] text-[#222] font-semibold border-b-2 border-[#2f8f55] flex items-center justify-center -mt-[4px]">VİDEO</span>
    <span class="ml-[17px] w-[54px] text-[#333] flex justify-center">İŞYATIRIM</span>
    <svg class="ml-[44px] w-[10px] h-[10px]" viewBox="0 0 10 10"><path d="M5 0V10M0 5H10" stroke="#444" stroke-width="1.2"/></svg>
    <svg class="ml-[273px] w-[3px] h-[11px]" viewBox="0 0 3 11" fill="#555"><circle cx="1.5" cy="2" r="1"/><circle cx="1.5" cy="5.5" r="1"/><circle cx="1.5" cy="9" r="1"/></svg>
    <div class="ml-[11px] w-[484px] h-[14px] rounded-full bg-[#f0f2ee] flex items-center px-[3px]">
      <span class="w-0 h-0 border-y-[4px] border-y-transparent border-r-[5px] border-r-[#666]"></span>
      <span class="ml-[2px] w-[14px] h-[7px] rounded-full bg-[#777]"></span>
      <span class="ml-auto w-0 h-0 border-y-[4px] border-y-transparent border-l-[5px] border-l-[#777]"></span>
    </div>
  </div>

  <!-- status bar -->
  <div class="h-[18px] bg-[#f4f4f4] flex items-center text-[8.5px] text-[#444]">
    <span class="ml-[6px]">Hazır</span>
    <svg class="ml-[16px] w-[12px] h-[12px]" viewBox="0 0 12 12" fill="none" stroke="#555"><circle cx="6" cy="2.5" r="1.5"/><path d="M1 5H11M6 5V8L3 11M6 8 9 11"/></svg>
    <span class="ml-[1px]">Erişilebilirlik: Önerilere göz atın</span>
    <div class="ml-auto flex items-center h-full">
      <span class="w-[33px] h-full bg-[#e3e3e3] flex items-center justify-center"><svg class="w-[12px] h-[12px]"><use href="#tbl"/></svg></span>
      <svg class="ml-[11px] w-[12px] h-[12px]" viewBox="0 0 12 12" fill="none" stroke="#666"><path d="M.5.5H11.5V11.5H.5ZM3.5 3H8.5V9H3.5Z"/></svg>
      <svg class="ml-[21px] w-[12px] h-[12px]" viewBox="0 0 12 12" fill="none" stroke="#666"><path d="M.5.5H11.5V11.5H.5ZM4 .5V6H8V.5"/></svg>
      <span class="ml-[15px] w-[6px] h-px bg-[#777]"></span>
      <span class="relative ml-[6px] w-[82px] h-px bg-[#888]"><span class="absolute left-[36px] -top-[4px] w-[4px] h-[9px] bg-[#555]"></span></span>
      <svg class="ml-[6px] w-[7px] h-[7px]" viewBox="0 0 7 7"><path d="M3.5 0V7M0 3.5H7" stroke="#777"/></svg>
      <span class="ml-[11px] mr-[10px] text-[#666]">%90</span>
    </div>
  </div>
</div>
</body>
</html>
